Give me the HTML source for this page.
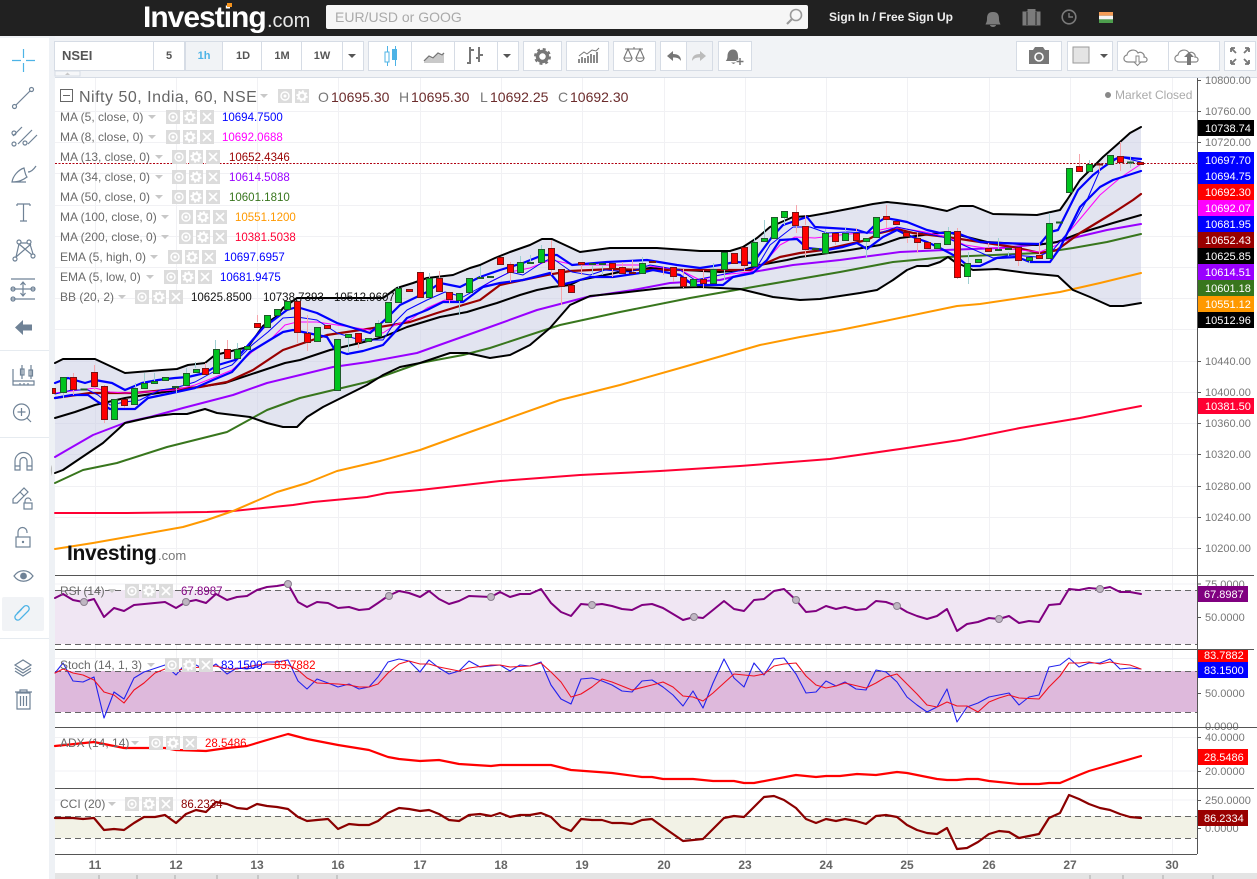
<!DOCTYPE html>
<html><head><meta charset="utf-8"><title>Nifty 50 chart</title>
<style>
html,body{margin:0;padding:0;background:#fff;width:1257px;height:879px;overflow:hidden}
svg{display:block;position:absolute;left:0;top:0}
text{font-family:"Liberation Sans",sans-serif}
.lg{font-size:12px;fill:#6a6a6a}
.v{font-size:11.5px}
.ax{font-size:11px;fill:#777}
.tg{font-size:11px;fill:#fff}
.d{font-size:12px;font-weight:bold;fill:#666;text-anchor:middle}
.tb{font-size:11px;fill:#555;font-weight:bold;text-anchor:middle}
.ic{fill:none;stroke:#6f8296;stroke-width:1.2}
.btn{fill:#fff;stroke:#d6dce5}
.ln{fill:none;stroke-linejoin:round;stroke-linecap:round}
</style></head><body>
<svg width="1257" height="879" viewBox="0 0 1257 879" xmlns="http://www.w3.org/2000/svg">
<defs>
<g id="sq"><rect width="14" height="14" fill="#dcdcdc"/><circle cx="7" cy="7" r="4" fill="none" stroke="#fff" stroke-width="1.4"/><circle cx="7" cy="7" r="1.5" fill="#fff"/></g>
<g id="gr"><rect width="14" height="14" fill="#dcdcdc"/><circle cx="7" cy="7" r="3.4" fill="none" stroke="#fff" stroke-width="2.2"/><circle cx="7" cy="7" r="5" fill="none" stroke="#fff" stroke-width="1.4" stroke-dasharray="2 1.9"/></g>
<g id="xx"><rect width="14" height="14" fill="#dcdcdc"/><path d="M3 3l8 8M11 3l-8 8" stroke="#fff" stroke-width="1.6"/></g>
<path id="cr" d="M0 0h8l-4 4z" fill="#c8c8c8"/>
</defs>

<!-- base -->
<rect width="1257" height="879" fill="#fff"/>
<rect x="0" y="36" width="1257" height="41" fill="#f1f3f6"/>
<rect x="49" y="36" width="6" height="843" fill="#eef1f5"/>
<rect x="0" y="36" width="49" height="843" fill="#fff"/>
<rect x="0" y="36" width="49" height="2" fill="#f1f3f6"/>
<rect x="55" y="77" width="1202" height="1" fill="#d6dce5"/>

<!-- header -->
<rect width="1257" height="36" fill="#212121"/>
<text x="143" y="27" font-size="30" font-weight="bold" fill="#fff" letter-spacing="-1">Investing</text>
<text x="267" y="27" font-size="20" fill="#e8e8e8">.com</text>
<rect x="227" y="3" width="5" height="4" fill="#f7941d"/>
<rect x="326" y="5" width="482" height="24" rx="2" fill="#f6f6f6"/>
<text x="335" y="22" font-size="14" fill="#aaa">EUR/USD or GOOG</text>
<circle cx="796" cy="15" r="5.5" fill="none" stroke="#9a9a9a" stroke-width="1.6"/><path d="M792 19l-5 5" stroke="#9a9a9a" stroke-width="2.2"/>
<text x="829" y="21" font-size="12" font-weight="bold" fill="#eee">Sign In / Free Sign Up</text>
<path d="M993 13c-5 0-6 3-6 7 0 3-1 4-1.500 5.500h15c-.5-1.500-1.500-2.500-1.500-5.500 0-4-1-7-6-7zM990 26a3 2 0 0 0 6 0z" fill="#7b7b7b" transform="translate(0 -1)"/>
<path d="M1023 12h17v13h-17zM1028 12v-2.500h7V12" fill="#7b7b7b" stroke="#7b7b7b"/><path d="M1027 12v13M1036 12v13" stroke="#212121"/>
<circle cx="1069" cy="17" r="6.800" fill="none" stroke="#7b7b7b" stroke-width="1.600"/><path d="M1069 13v4h4" fill="none" stroke="#7b7b7b" stroke-width="1.400"/>
<rect x="1099" y="12" width="14" height="3.700" fill="#f39c56"/><rect x="1099" y="15.700" width="14" height="3.700" fill="#f4f4f4"/><rect x="1099" y="19.400" width="14" height="3.600" fill="#4d9e4d"/>

<!-- toolbar buttons -->
<g class="btn">
<rect x="54.500" y="41.500" width="309" height="29"/>
<rect x="368.500" y="41.500" width="129" height="29"/><rect x="497.500" y="41.500" width="21" height="29"/>
<rect x="523.500" y="41.500" width="38" height="29"/><rect x="566.500" y="41.500" width="42" height="29"/>
<rect x="613.500" y="41.500" width="42" height="29"/><rect x="660.500" y="41.500" width="26" height="29"/>
<rect x="686.500" y="41.500" width="26" height="29" style="fill:#f1f3f6"/><rect x="718.500" y="41.500" width="33" height="29"/>
<rect x="1016.500" y="41.500" width="45" height="29"/><rect x="1067.500" y="41.500" width="45" height="29"/>
<rect x="1117.500" y="41.500" width="51" height="29"/><rect x="1168.500" y="41.500" width="51" height="29"/><rect x="1224.500" y="41.500" width="31" height="29"/>
<rect x="185.500" y="41.500" width="37" height="29" style="fill:#f1f3f6"/>
</g>
<path d="M153.500 41v30M184.500 41v30M222.500 41v30M261.500 41v30M301.500 41v30M342.500 41v30M411.500 41v30M454.500 41v30" stroke="#d6dce5"/>
<text x="62" y="60" font-size="13" font-weight="bold" fill="#555">NSEI</text>
<text class="tb" x="169" y="59">5</text><text class="tb" x="204" y="59" style="fill:#4db3e6">1h</text><text class="tb" x="243" y="59">1D</text><text class="tb" x="282" y="59">1M</text><text class="tb" x="322" y="59">1W</text>
<path d="M348 54h8l-4 4zM503 54h8l-4 4zM1100 54h8l-4 4z" fill="#555"/>
<path d="M387.500 46v20M395.500 46v20" stroke="#4db3e6"/><rect x="385" y="52" width="4" height="10" fill="#fff" stroke="#4db3e6"/><rect x="392" y="49" width="5" height="11" fill="#4db3e6"/>
<path d="M424 62l5-5 4 2 5-5 4 2 2-2v9h-20z" fill="#c9c9c9"/><path d="M424 61l5-5 4 2 5-5 4 2 2-2" fill="none" stroke="#777" stroke-width="1.300"/>
<path d="M470 47v17M467 63h3M479 47v15M479 55h4M470 52h-0" stroke="#777" stroke-width="2" fill="none"/><path d="M470 50h4M479 58h-3" stroke="#777" stroke-width="2"/>
<circle cx="542.500" cy="56.500" r="5" fill="none" stroke="#777" stroke-width="3.500"/><circle cx="542.500" cy="56.500" r="7.500" fill="none" stroke="#777" stroke-width="2" stroke-dasharray="3 2.900"/>
<path d="M579 63v-4M582 63v-6M585 63v-5M588 63v-7M591 63v-9M594 63v-8M597 63v-11" stroke="#777" stroke-width="1.700"/><path d="M579 56l5-4 3 2 5-4 4 1 3-3" fill="none" stroke="#777"/>
<path d="M634 49v-2M625 49h18M628 49l-4 9h8zM640 49l-4 9h8z" fill="none" stroke="#777" stroke-width="1.100"/><path d="M624 58a4 3.500 0 0 0 8 0zM636 58a4 3.500 0 0 0 8 0z" fill="none" stroke="#777"/>
<path d="M667 56l6-5v3c5 0 8 2 8 7-2-3-4-3.500-8-3.500V61z" fill="#777"/>
<path d="M706 56l-6-5v3c-5 0-8 2-8 7 2-3 4-3.500 8-3.500V61z" fill="#bbb"/>
<path d="M733 49.500c-3.500 0-5.500 3-5.500 6.500 0 2.500-.8 4-1.800 5h14c-1-1-1.500-2.500-1.700-5 0-3.500-1.500-6.500-5-6.500zM731 62.500h5l-2.500 1.500z" fill="#777"/><path d="M740 58v7M736.500 61.500h7" stroke="#fff" stroke-width="3.500"/><path d="M740 58v7M736.500 61.500h7" stroke="#777" stroke-width="1.500"/>
<path d="M1029 50h4l2-3h8l2 3h4v14h-20z" fill="#777"/><circle cx="1039" cy="57" r="4" fill="#777" stroke="#fff" stroke-width="1.600"/>
<rect x="1073" y="47" width="16" height="16" fill="#e4e4e4" stroke="#999"/>
<path d="M1128 62c-5 0-5.500-6-1-7 .5-5 8-7 11-2 3-2 7 1 6 4 4 0 4 5 .5 5h-4M1135 62h-7" fill="none" stroke="#888" stroke-width="1.200"/><path d="M1139 56v6h2l-3.500 3.500L1134 62h2v-6z" fill="#fff" stroke="#888"/>
<path d="M1179 62c-5 0-5.500-6-1-7 .5-5 8-7 11-2 3-2 7 1 6 4 4 0 4 5 .5 5z" fill="none" stroke="#888" stroke-width="1.200"/><path d="M1194 57l-5-5-5 5h3v8h4v-8z" fill="#777"/>
<path d="M1231 48l5 5M1231 48h4M1231 48v4M1249 48l-5 5M1249 48h-4M1249 48v4M1231 64l5-5M1231 64h4M1231 64v-4M1249 64l-5-5M1249 64h-4M1249 64v-4" stroke="#777" stroke-width="1.800" fill="none"/>
<rect x="55" y="71" width="25" height="5" fill="#f6f7f9" stroke="#d6dce5"/><path d="M65 75l2.500-2.500 2.500 2.500z" fill="#c8c8c8"/>

<!-- grid -->
<path d="M55 111.500H1197M55 142.500H1197M55 173.500H1197M55 205.500H1197M55 236.500H1197M55 267.500H1197M55 298.500H1197M55 329.500H1197M55 361.500H1197M55 392.500H1197M55 423.500H1197M55 454.500H1197M55 486.500H1197M55 517.500H1197M55 548.500H1197M55 584H1197M55 617H1197M55 658.500H1197M55 693H1197M55 737.500H1197M55 771H1197M55 800H1197M55 828H1197" stroke="#f1f1f4"/>
<path d="M95.500 78V854M176.500 78V854M257.500 78V854M338.500 78V854M420.500 78V854M501.500 78V854M582.500 78V854M664.500 78V854M745.500 78V854M826.500 78V854M907.500 78V854M989.500 78V854M1070.500 78V854M1172.500 78V854" stroke="#f1f1f4"/>

<!-- BB fill -->
<polygon fill="#c8cbe2" fill-opacity=".52" points="55,363 63,359 95,359 125,373 162,370 177,369 188,365 205,363 215,355 248,347 263,326 277,316 283,308 297,298 383,298 397,288 413,283 427,278 453,275 470,268 480,265 495,258 510,252 530,245 542,239 552,239 580,252 610,248 657,248 700,251 730,251 743,247 757,238 770,227 793,217 810,216 827,213 853,208 873,204 887,202 897,203 923,206 947,211 960,206 973,206 993,214 1037,215 1060,210 1067,200 1080,180 1103,157 1120,142 1130,133 1141,127 1141,303 1123,306 1110,306 1090,297 1073,290 1058,276 1027,273 997,269 973,270 955,262 948,257 940,262 928,266 917,266 907,270 893,280 877,290 860,293 840,296 820,299 800,300 773,297 740,289 700,287 663,288 620,293 590,296 570,305 550,328 530,345 510,355 490,358 467,353 450,353 420,363 400,367 383,375 367,385 343,397 323,407 307,417 297,427 283,427 267,423 250,417 217,413 205,409 187,414 173,414 157,416 147,418 125,423 103,443 63,470 55,473"/>

<!-- crosshair -->
<path d="M55 163.500H1197" stroke="#b00010" stroke-dasharray="2 1.500"/>

<!-- MA lines -->
<g class="ln" stroke-width="2">
<polyline stroke="#ff0033" points="55,513 127,513 207,512 233,511 293,505 313,502 367,497 387,493 420,490 500,481 580,475 660,471 740,466 830,459 900,449 960,440 1020,428 1080,418 1120,410 1141,406"/>
<polyline stroke="#ff9900" points="55,549 93,543 127,537 183,527 207,520 233,511 277,492 307,483 337,471 380,461 420,450 470,432 560,400 620,385 680,368 760,345 800,337 840,330 880,322 957,306 980,304 1040,295 1060,292 1100,283 1141,273"/>
<polyline stroke="#38761d" points="55,483 83,470 117,463 167,447 227,432 267,410 300,398 367,382 420,363 463,355 490,348 560,325 620,312 690,298 753,287 840,272 893,262 947,257 1040,253 1073,248 1107,242 1141,234"/>
<polyline stroke="#9900ff" points="55,457 67,450 93,435 127,422 150,417 183,408 233,395 267,383 300,375 333,367 368,362 417,353 490,327 537,310 587,297 633,290 670,283 720,280 753,272 793,265 840,260 900,252 945,250 1000,248 1053,243 1073,238 1107,230 1141,224"/>
<polyline stroke="#000" points="55,363 63,359 95,359 125,373 162,370 177,369 188,365 205,363 215,355 248,347 263,326 277,316 283,308 297,298 383,298 397,288 413,283 427,278 453,275 470,268 480,265 495,258 510,252 530,245 542,239 552,239 580,252 610,248 657,248 700,251 730,251 743,247 757,238 770,227 793,217 810,216 827,213 853,208 873,204 887,202 897,203 923,206 947,211 960,206 973,206 993,214 1037,215 1060,210 1067,200 1080,180 1103,157 1120,142 1130,133 1141,127"/>
<polyline stroke="#000" points="55,473 63,470 103,443 125,423 147,418 157,416 173,414 187,414 205,409 217,413 250,417 267,423 283,427 297,427 307,417 323,407 343,397 367,385 383,375 400,367 420,363 450,353 467,353 490,358 510,355 530,345 550,328 570,305 590,296 620,293 663,288 700,287 740,289 773,297 800,300 820,299 840,296 860,293 877,290 893,280 907,270 917,266 928,266 940,262 948,257 955,262 973,270 997,269 1027,273 1058,276 1073,290 1090,297 1110,306 1123,306 1141,303"/>
<polyline stroke="#000" points="55,418 75,412 95,405 125,398 178,390 225,383 255,373 285,363 300,360 330,350 360,343 383,337 407,327 440,317 467,312 480,308 497,303 520,295 537,290 552,287 570,285 580,280 620,272 650,268 667,269 720,272 743,270 760,265 787,260 800,257 850,250 880,245 900,238 947,232 967,237 987,242 1037,245 1057,242 1080,233 1113,223 1141,215"/>
<polyline stroke="#990000" stroke-width="2.200" points="55,398 90,393 133,393 200,387 227,382 253,370 283,350 327,335 367,329 410,322 437,313 463,305 480,300 500,285 523,280 547,275 570,271 613,269 647,270 700,270 750,270 780,257 800,253 823,250 867,240 880,233 897,229 913,233 947,237 980,242 1013,247 1040,253 1057,250 1080,233 1113,213 1133,200 1141,194"/>
</g>
<g class="ln" stroke-width="1">
<polyline stroke="#ff00ff" points="55,393 80,390 95,388 110,392 125,393 145,392 175,390 195,385 213,378 232,370 252,352 270,340 285,325 297,322 317,322 337,325 370,330 383,333 395,325 410,320 427,308 445,300 463,302 490,282 510,272 530,268 545,262 552,260 575,265 600,265 640,265 680,270 700,280 720,275 750,272 765,262 780,245 795,237 815,238 840,235 870,232 890,228 900,228 925,232 947,237 965,245 985,248 1000,248 1040,252 1057,245 1075,225 1100,195 1120,178 1141,164"/>
<polyline stroke="#0000ff" points="55,394 72,390 88,390 98,395 110,405 125,402 140,400 160,390 175,388 195,382 213,372 232,365 252,345 268,332 283,318 297,317 317,320 337,333 360,340 383,340 395,322 407,310 427,300 445,292 463,297 490,282 510,272 523,275 543,262 552,258 572,272 590,275 605,270 630,272 650,265 680,270 695,280 720,275 757,267 770,245 793,227 810,227 827,233 847,232 867,233 880,233 897,227 920,232 947,238 970,248 993,258 1013,255 1037,257 1053,250 1070,230 1087,200 1100,170 1120,157 1141,162"/>
</g>
<g class="ln" stroke="#0000ff" stroke-width="2.200">
<polyline points="55,383 68,378 85,383 95,380 112,383 125,390 142,383 158,380 175,378 188,377 205,373 218,365 235,360 250,343 263,328 287,310 297,307 317,313 337,323 370,333 387,318 400,305 427,292 440,283 460,287 480,277 500,270 523,263 543,255 557,255 572,265 607,262 647,260 677,265 700,268 720,265 735,262 753,263 772,237 783,225 807,217 815,227 847,229 857,230 867,233 877,223 885,218 897,220 907,222 927,230 940,233 957,233 980,242 997,243 1040,244 1050,232 1058,230 1078,190 1093,175 1113,160 1120,157 1141,159"/>
<polyline points="55,398 72,395 88,395 98,402 110,409 135,409 148,398 172,393 195,388 213,380 232,372 250,352 283,332 293,330 327,337 335,350 347,354 363,351 383,345 395,332 407,318 427,310 443,302 463,302 483,287 500,283 523,280 550,273 560,285 573,282 590,277 613,277 640,273 653,270 680,275 693,285 723,285 733,277 753,273 767,260 780,240 797,239 807,248 827,250 843,247 857,243 867,249 883,237 897,230 907,235 927,242 940,248 957,257 968,266 980,266 997,258 1017,257 1030,262 1050,262 1060,248 1080,207 1100,187 1113,180 1141,171"/>
</g>

<!-- wicks -->
<path fill="none" stroke="#f6a6ad" d="M104.500 385V423M73.500 373V395M94.500 365V390M124.500 405V408M227.500 340V349M205.500 363V368M257.500 315V322M297.500 300V343M307.500 315V351M358.500 333V348M439.500 271V278M449.500 299V303M510.500 262V282M551.500 240V248M551.500 270V275M561.500 287V305M581.500 265V275M612.500 268V277M622.500 262V267M632.500 260V272M663.500 266V275M673.500 276V282M683.500 268V276M683.500 287V288M703.500 270V279M703.500 283V288M744.500 265V271M796.500 205V212M796.500 225V233M805.500 215V225M805.500 250V257M835.500 241V245M856.500 228V232M886.500 205V216M886.500 220V228M907.500 238V243M917.500 232V238M917.500 243V253M957.500 228V231M957.500 277V279M988.500 243V248M1018.500 260V266M1039.500 243V255M1079.500 154V166M1099.500 164V172M1120.500 142V156M1120.500 162V171"/>
<path fill="none" stroke="#9fcfd2" d="M215.500 340V349M237.500 343V349M144.500 373V383M154.500 373V382M135.500 383V388M176.500 388V393M186.500 368V373M195.500 362V368M348.500 335V353M378.500 320V323M398.500 286V289M429.500 273V278M459.500 300V315M480.500 266V277M520.500 256V262M530.500 255V262M541.500 245V249M592.500 263V275M602.500 263V275M642.500 257V263M713.500 263V269M724.500 270V280M754.500 238V242M764.500 220V238M784.500 217V225M825.500 229V233M845.500 228V232M866.500 242V258M948.500 227V231M968.500 252V263M968.500 276V284M998.500 238V249M1008.500 252V256M1029.500 261V263M1049.500 213V224M1089.500 160V164M1130.500 157V168M63.500 392V398"/>

<!-- candles -->
<path fill="#00c41f" stroke="#1f5a2a" d="M60.500 377.500h6v15h-6zM111.500 399.500h6v20h-6zM131.500 388.500h6v16h-6zM141.500 383.500h6v5h-6zM151.500 381.500h6v2h-6zM162.500 377.500h6v3h-6zM172.500 386.500h6v1h-6zM183.500 373.500h6v12h-6zM193.500 369.500h6v3h-6zM213.500 349.500h6v24h-6zM234.500 349.500h6v9h-6zM244.500 346.500h6v3h-6zM264.500 315.500h6v12h-6zM274.500 309.500h6v6h-6zM284.500 301.500h6v8h-6zM314.500 327.500h6v14h-6zM334.500 339.500h6v51h-6zM345.500 334.500h6v3h-6zM365.500 338.500h6v3h-6zM375.500 323.500h6v13h-6zM385.500 302.500h6v20h-6zM395.500 288.500h6v14h-6zM426.500 278.500h6v19h-6zM456.500 293.500h6v7h-6zM466.500 278.500h6v14h-6zM477.500 277.500h6v1h-6zM487.500 276.500h6v1h-6zM517.500 262.500h6v10h-6zM527.500 262.500h6v1h-6zM538.500 249.500h6v13h-6zM589.500 263.500h6v1h-6zM599.500 263.500h6v1h-6zM639.500 263.500h6v10h-6zM690.500 279.500h6v7h-6zM710.500 269.500h6v14h-6zM721.500 252.500h6v17h-6zM751.500 242.500h6v24h-6zM761.500 238.500h6v3h-6zM771.500 217.500h6v21h-6zM781.500 211.500h6v6h-6zM812.500 248.500h6v1h-6zM822.500 233.500h6v20h-6zM842.500 233.500h6v7h-6zM863.500 238.500h6v3h-6zM873.500 217.500h6v20h-6zM934.500 243.500h6v5h-6zM944.500 231.500h6v13h-6zM964.500 263.500h6v13h-6zM975.500 259.500h6v3h-6zM995.500 249.500h6v1h-6zM1005.500 248.500h6v1h-6zM1026.500 257.500h6v3h-6zM1046.500 223.500h6v35h-6zM1056.500 222h6v1h-6zM1066.500 168.500h6v24h-6zM1086.500 164.500h6v7h-6zM1107.500 155.500h6v9h-6zM1127.500 162h6v1h-6zM81 389h6v1h-6z"/>
<path fill="#ff0000" stroke="#7a1414" d="M52.500 388.500h3v5h-3zM70.500 377.500h6v12h-6zM91.500 372.500h6v14h-6zM101.500 386.500h6v33h-6zM121.500 399.500h6v6h-6zM202.500 368.500h6v6h-6zM224.500 349.500h6v9h-6zM254.500 323.500h6v4h-6zM294.500 301.500h6v31h-6zM304.500 333.500h6v9h-6zM324.500 325.500h6v3h-6zM355.500 333.500h6v9h-6zM406.500 289.500h6v2h-6zM417.500 272.500h6v25h-6zM436.500 278.500h6v13h-6zM446.500 292.500h6v7h-6zM497.500 257.500h6v7h-6zM507.500 264.500h6v8h-6zM548.500 248.500h6v21h-6zM558.500 269.500h6v17h-6zM568.500 285.500h6v7h-6zM578.500 262.500h6v2h-6zM609.500 263.500h6v5h-6zM619.500 267.500h6v6h-6zM629.500 272.500h6v1h-6zM649.500 261.500h6v1h-6zM670.500 267.500h6v9h-6zM680.500 277.500h6v9h-6zM700.500 279.500h6v4h-6zM731.500 253.500h6v10h-6zM741.500 247.500h6v18h-6zM792.500 212.500h6v13h-6zM802.500 226.500h6v23h-6zM832.500 233.500h6v8h-6zM853.500 233.500h6v7h-6zM883.500 216.500h6v3h-6zM893.500 221.500h6v3h-6zM903.500 232.500h6v4h-6zM914.500 238.500h6v4h-6zM924.500 242.500h6v6h-6zM954.500 231.500h6v46h-6zM985.500 248.500h6v3h-6zM1015.500 247.500h6v13h-6zM1036.500 255.500h6v3h-6zM1076.500 166.500h6v5h-6zM1096.500 164h6v1h-6zM1117.500 156.500h6v6h-6zM1137.500 162.500h6v2h-6z"/>

<!-- watermark -->
<text x="67" y="560" font-size="21" font-weight="bold" fill="#111" letter-spacing="-.3">Investing</text>
<text x="158" y="560" font-size="13" fill="#777">.com</text>

<!-- indicator panels -->
<rect x="55" y="590" width="1142" height="54" fill="#f0e6f3"/>
<rect x="55" y="671" width="1142" height="41" fill="#deb9dc"/>
<rect x="55" y="816" width="1142" height="22" fill="#f2f2e6"/>
<path d="M55 590.500H1197M55 644.500H1197M55 671.500H1197M55 712.500H1197M55 816.500H1197M55 838.500H1197" stroke="#666" stroke-dasharray="6 4"/>
<path d="M55 575.500H1254M55 649.500H1254M55 727.500H1254M55 788.500H1254M55 854.500H1197" stroke="#555"/>
<path d="M1197.500 78V854" stroke="#555"/>

<polyline class="ln" stroke="#800080" stroke-width="2" points="55,598 63,594 73,600 83,602 94,599 104,617 114,608 124,611 134,605 165,602 176,608 186,602 196,600 206,603 216,594 227,600 237,597 247,596 257,590 267,587 277,586 288,584 298,602 307,607 317,602 328,603 338,608 349,607 359,610 369,609 378,603 388,596 399,591 409,593 420,597 429,591 439,599 449,604 459,601 469,596 491,597 500,592 510,597 520,594 530,594 541,589 551,603 561,612 571,616 581,604 592,605 602,604 612,606 622,609 632,610 642,605 652,604 663,608 673,614 683,620 694,617 703,618 713,610 724,601 734,609 744,611 754,600 764,599 774,591 784,589 796,600 806,612 816,611 826,606 836,609 845,607 856,610 866,609 876,601 886,602 897,606 907,612 917,616 927,619 937,616 947,609 957,631 967,624 978,622 989,618 999,619 1009,616 1019,623 1029,621 1039,622 1049,605 1060,604 1069,589 1079,590 1089,588 1100,589 1110,587 1120,592 1130,592 1141,594"/>
<g fill="#bfb6c2" stroke="#8a7f8e"><circle cx="84" cy="602" r="3.500"/><circle cx="186" cy="602" r="3.500"/><circle cx="288" cy="584" r="3.500"/><circle cx="389" cy="596" r="3.500"/><circle cx="491" cy="597" r="3.500"/><circle cx="592" cy="605" r="3.500"/><circle cx="694" cy="617" r="3.500"/><circle cx="796" cy="600" r="3.500"/><circle cx="897" cy="606" r="3.500"/><circle cx="999" cy="619" r="3.500"/><circle cx="1100" cy="589" r="3.500"/></g>

<polyline class="ln" stroke="#2222ee" stroke-width="1.100" points="55,673 63,663 73,681 83,682 94,677 104,718 114,692 124,699 134,678 144,672 165,665 176,675 186,663 196,665 206,670 216,664 227,674 237,668 247,669 257,667 267,662 277,662 288,660 298,681 307,689 317,679 328,683 338,687 349,684 359,689 369,687 378,677 388,662 399,659 409,661 420,672 429,660 439,668 449,674 459,671 469,661 480,667 500,665 510,671 520,665 530,666 541,662 551,685 561,699 571,704 581,679 592,678 602,681 612,685 622,691 632,692 642,681 652,680 663,687 673,695 683,706 693,691 703,708 713,683 724,659 734,678 744,687 754,663 764,675 774,659 784,658 796,674 806,693 816,692 826,681 836,686 845,682 856,689 866,690 876,670 886,672 897,682 907,697 917,705 927,712 937,707 947,689 957,722 967,707 978,703 989,697 1009,693 1019,705 1029,697 1039,695 1049,667 1060,665 1069,658 1079,667 1089,663 1100,663 1110,659 1120,669 1130,668 1141,669"/>
<polyline class="ln" stroke="#f01020" stroke-width="1.100" points="55,673 63,669 73,673 83,675 94,680 104,692 114,695 124,703 134,690 144,683 155,673 165,669 176,671 186,668 206,667 216,666 227,669 237,669 257,665 267,664 288,665 298,670 307,678 317,683 338,684 349,685 359,687 369,687 378,684 388,673 399,664 409,661 420,664 429,664 439,667 449,669 459,671 469,668 491,665 500,665 510,667 530,666 541,663 551,672 561,682 571,697 581,694 592,687 602,679 612,682 632,690 652,685 663,682 673,687 683,696 693,697 703,701 713,693 724,683 734,674 754,676 764,674 774,666 784,664 796,663 806,676 816,685 826,688 836,686 845,683 866,688 876,683 886,677 897,674 907,684 917,694 927,705 937,707 947,702 957,706 967,706 978,712 989,702 999,698 1009,695 1019,698 1039,699 1049,687 1060,676 1069,663 1079,663 1089,662 1100,664 1110,662 1120,664 1130,665 1141,669"/>

<polyline class="ln" stroke="#ff0000" stroke-width="2.200" points="55,746 94,742 124,748 165,748 176,750 206,751 227,748 247,746 267,740 288,734 307,739 338,745 369,750 388,757 399,759 420,761 439,760 459,764 491,766 500,765 551,765 571,770 612,773 642,777 652,777 663,779 693,779 713,781 734,781 744,783 754,783 796,775 816,777 826,776 840,776 857,774 876,775 897,772 907,773 937,779 947,780 957,780 967,779 978,779 989,781 1019,784 1039,784 1049,783 1060,783 1079,775 1089,771 1110,765 1141,756"/>

<polyline class="ln" stroke="#8b0000" stroke-width="2.200" points="55,818 73,818 83,819 94,818 104,830 114,829 124,830 134,823 144,817 155,817 165,815 176,823 186,814 196,810 206,812 216,802 227,804 237,808 247,809 257,804 267,806 277,807 288,809 298,817 307,821 317,820 328,819 338,829 349,824 359,825 369,825 378,821 388,813 399,808 409,809 420,811 429,810 439,814 449,820 459,821 469,815 480,814 491,816 500,813 510,817 520,815 530,815 541,813 551,817 561,827 571,831 581,819 592,820 602,820 612,823 622,823 632,824 642,820 652,819 663,827 673,834 683,841 703,839 713,829 724,818 734,816 744,817 754,807 764,797 774,796 784,800 796,808 806,819 816,823 826,819 836,821 845,819 856,821 866,824 876,816 886,815 897,817 907,825 917,830 927,833 937,834 947,828 957,849 967,848 978,842 989,834 999,831 1009,832 1019,838 1029,836 1039,834 1049,818 1060,813 1069,795 1079,799 1089,804 1100,808 1110,810 1120,814 1130,817 1141,818"/>

<!-- legend -->
<rect x="60.500" y="89.500" width="12" height="12" fill="none" stroke="#666"/><path d="M63 95.500h7" stroke="#666"/>
<text x="79" y="102" font-size="16" fill="#666" letter-spacing=".5">Nifty 50, India, 60, NSE</text>
<use href="#cr" x="260" y="94"/><use href="#sq" x="278" y="89"/><use href="#gr" x="295" y="89"/>
<g font-size="14" fill="#6b2b2b">
<text x="318" y="102" fill="#777">O</text><text x="331" y="102">10695.30</text>
<text x="399" y="102" fill="#777">H</text><text x="411" y="102">10695.30</text>
<text x="480" y="102" fill="#777">L</text><text x="490" y="102">10692.25</text>
<text x="558" y="102" fill="#777">C</text><text x="570" y="102">10692.30</text>
</g>
<circle cx="1108" cy="95" r="3" fill="#888"/><text x="1115" y="99" font-size="12" fill="#aaa">Market Closed</text>

<text class="lg" x="60" y="121">MA (5, close, 0)</text><use href="#cr" x="148" y="115"/><use href="#sq" x="166" y="110"/><use href="#gr" x="183" y="110"/><use href="#xx" x="200" y="110"/><text class="v" x="222" y="121" fill="#0000ff">10694.7500</text>
<text class="lg" x="60" y="141">MA (8, close, 0)</text><use href="#cr" x="148" y="135"/><use href="#sq" x="166" y="130"/><use href="#gr" x="183" y="130"/><use href="#xx" x="200" y="130"/><text class="v" x="222" y="141" fill="#ff00ff">10692.0688</text>
<text class="lg" x="60" y="161">MA (13, close, 0)</text><use href="#cr" x="155" y="155"/><use href="#sq" x="172" y="150"/><use href="#gr" x="189" y="150"/><use href="#xx" x="206" y="150"/><text class="v" x="229" y="161" fill="#990000">10652.4346</text>
<text class="lg" x="60" y="181">MA (34, close, 0)</text><use href="#cr" x="155" y="175"/><use href="#sq" x="172" y="170"/><use href="#gr" x="189" y="170"/><use href="#xx" x="206" y="170"/><text class="v" x="229" y="181" fill="#9900ff">10614.5088</text>
<text class="lg" x="60" y="201">MA (50, close, 0)</text><use href="#cr" x="155" y="195"/><use href="#sq" x="172" y="190"/><use href="#gr" x="189" y="190"/><use href="#xx" x="206" y="190"/><text class="v" x="229" y="201" fill="#38761d">10601.1810</text>
<text class="lg" x="60" y="221">MA (100, close, 0)</text><use href="#cr" x="161" y="215"/><use href="#sq" x="179" y="210"/><use href="#gr" x="196" y="210"/><use href="#xx" x="213" y="210"/><text class="v" x="235" y="221" fill="#ff9900">10551.1200</text>
<text class="lg" x="60" y="241">MA (200, close, 0)</text><use href="#cr" x="161" y="235"/><use href="#sq" x="179" y="230"/><use href="#gr" x="196" y="230"/><use href="#xx" x="213" y="230"/><text class="v" x="235" y="241" fill="#ff0033">10381.5038</text>
<text class="lg" x="60" y="261">EMA (5, high, 0)</text><use href="#cr" x="150" y="255"/><use href="#sq" x="168" y="250"/><use href="#gr" x="185" y="250"/><use href="#xx" x="202" y="250"/><text class="v" x="224" y="261" fill="#0000ff">10697.6957</text>
<text class="lg" x="60" y="281">EMA (5, low, 0)</text><use href="#cr" x="146" y="275"/><use href="#sq" x="164" y="270"/><use href="#gr" x="181" y="270"/><use href="#xx" x="198" y="270"/><text class="v" x="220" y="281" fill="#0000ff">10681.9475</text>
<text class="lg" x="60" y="301">BB (20, 2)</text><use href="#cr" x="118" y="295"/><use href="#sq" x="135" y="290"/><use href="#gr" x="152" y="290"/><use href="#xx" x="169" y="290"/><text class="v" x="191" y="301" fill="#111">10625.8500</text><text class="v" x="263" y="301" fill="#111">10738.7393</text><text class="v" x="334" y="301" fill="#111">10512.9607</text>

<text class="lg" x="60" y="595">RSI (14)</text><use href="#cr" x="108" y="589"/><use href="#sq" x="125" y="584"/><use href="#gr" x="142" y="584"/><use href="#xx" x="159" y="584"/><text class="v" x="181" y="595" fill="#800080">67.8987</text>
<text class="lg" x="60" y="669">Stoch (14, 1, 3)</text><use href="#cr" x="147" y="663"/><use href="#sq" x="165" y="658"/><use href="#gr" x="182" y="658"/><use href="#xx" x="199" y="658"/><text class="v" x="221" y="669" fill="#0000ff">83.1500</text><text class="v" x="274" y="669" fill="#ff0000">83.7882</text>
<text class="lg" x="60" y="747">ADX (14, 14)</text><use href="#cr" x="131" y="741"/><use href="#sq" x="149" y="736"/><use href="#gr" x="166" y="736"/><use href="#xx" x="183" y="736"/><text class="v" x="205" y="747" fill="#ff0000">28.5486</text>
<text class="lg" x="60" y="808">CCI (20)</text><use href="#cr" x="108" y="802"/><use href="#sq" x="125" y="797"/><use href="#gr" x="142" y="797"/><use href="#xx" x="159" y="797"/><text class="v" x="181" y="808" fill="#8b0000">86.2334</text>

<!-- y axis -->
<path d="M1197 80.500h4M1197 111.500h4M1197 142.500h4M1197 361.500h4M1197 392.500h4M1197 423.500h4M1197 454.500h4M1197 486.500h4M1197 517.500h4M1197 548.500h4M1197 584h4M1197 617.500h4M1197 693.500h4M1197 737.500h4M1197 771.500h4M1197 800.500h4M1197 828.500h4" stroke="#555"/>
<g class="ax">
<text x="1205" y="84">10800.00</text><text x="1205" y="115">10760.00</text><text x="1205" y="146">10720.00</text>
<text x="1205" y="365">10440.00</text><text x="1205" y="396">10400.00</text><text x="1205" y="427">10360.00</text><text x="1205" y="458">10320.00</text><text x="1205" y="490">10280.00</text><text x="1205" y="521">10240.00</text><text x="1205" y="552">10200.00</text>
<text x="1205" y="588">75.0000</text><text x="1205" y="621">50.0000</text><text x="1205" y="697">50.0000</text><text x="1205" y="730">0.0000</text><text x="1205" y="741">40.0000</text><text x="1205" y="775">20.0000</text><text x="1205" y="804">250.0000</text><text x="1205" y="832">0.0000</text>
</g>
<rect x="1197" y="727" width="60" height="1" fill="#555"/>
<g>
<rect x="1198" y="120" width="56" height="16" fill="#000"/><text class="tg" x="1205" y="132">10738.74</text>
<rect x="1198" y="152" width="56" height="32" fill="#0000ff"/><text class="tg" x="1205" y="164">10697.70</text><text class="tg" x="1205" y="180">10694.75</text>
<rect x="1198" y="184" width="56" height="16" fill="#ff0000"/><text class="tg" x="1205" y="196">10692.30</text>
<rect x="1198" y="200" width="56" height="16" fill="#ff00ff"/><text class="tg" x="1205" y="212">10692.07</text>
<rect x="1198" y="216" width="56" height="16" fill="#0000ff"/><text class="tg" x="1205" y="228">10681.95</text>
<rect x="1198" y="232" width="56" height="16" fill="#990000"/><text class="tg" x="1205" y="244">10652.43</text>
<rect x="1198" y="248" width="56" height="16" fill="#000"/><text class="tg" x="1205" y="260">10625.85</text>
<rect x="1198" y="264" width="56" height="16" fill="#9900ff"/><text class="tg" x="1205" y="276">10614.51</text>
<rect x="1198" y="280" width="56" height="16" fill="#38761d"/><text class="tg" x="1205" y="292">10601.18</text>
<rect x="1198" y="296" width="56" height="16" fill="#ff9900"/><text class="tg" x="1205" y="308">10551.12</text>
<rect x="1198" y="312" width="56" height="16" fill="#000"/><text class="tg" x="1205" y="324">10512.96</text>
<rect x="1198" y="398" width="56" height="16" fill="#ff0033"/><text class="tg" x="1205" y="410">10381.50</text>
<rect x="1198" y="586" width="50" height="16" fill="#800080"/><text class="tg" x="1204" y="598">67.8987</text>
<rect x="1198" y="650" width="50" height="12" fill="#ff0000"/><text class="tg" x="1204" y="659">83.7882</text>
<rect x="1198" y="662" width="50" height="16" fill="#0000ff"/><text class="tg" x="1204" y="674">83.1500</text>
<rect x="1198" y="749" width="50" height="16" fill="#ff0000"/><text class="tg" x="1204" y="761">28.5486</text>
<rect x="1198" y="810" width="50" height="16" fill="#990000"/><text class="tg" x="1204" y="822">86.2334</text>
</g>

<!-- x axis -->
<rect x="55" y="873" width="1202" height="6" fill="#e4e4e4"/>
<g class="d">
<text x="95" y="869">11</text><text x="176" y="869">12</text><text x="257" y="869">13</text><text x="338" y="869">16</text><text x="420" y="869">17</text><text x="501" y="869">18</text><text x="582" y="869">19</text><text x="664" y="869">20</text><text x="745" y="869">23</text><text x="826" y="869">24</text><text x="907" y="869">25</text><text x="989" y="869">26</text><text x="1070" y="869">27</text><text x="1172" y="869">30</text>
</g>
<path d="M99 875v4M137 875v4M175 875v4M217 875v4M258 875v4M298 875v4M337 875v4M1090 875v4M1123 875v4M1163 875v4M1213 875v4" stroke="#aaa"/>

<!-- sidebar -->
<path d="M12 60.500h9M26 60.500h9M23.500 49v9M23.500 63v9" stroke="#4db3e6" stroke-width="1.200"/>
<g class="ic">
<path d="M16 105l14-14"/><circle cx="14.500" cy="106.500" r="2"/><circle cx="31.500" cy="89.500" r="2"/>
<path d="M13 136l9-9M18 144l14-14M28 144l9-9"/><circle cx="14" cy="133" r="2"/><circle cx="14" cy="144" r="2"/><circle cx="25" cy="143" r="2"/>
<path d="M12 182c1-6 6-12 12-14 1 5 2 8 3 9-4 3-8 5-15 5zM12 182h14M28 172c3 0 6-3 8-6"/>
<path d="M17 204h13M23.500 204v17M20 221h7M17 204v2M30 204v2"/>
<circle cx="15" cy="259" r="2"/><circle cx="33" cy="256" r="2"/><circle cx="19" cy="242" r="2"/><circle cx="29" cy="242" r="2"/><path d="M16 257l3-13M21 243h6M30 244l3 10M16 257l15-13M19 244l13 11"/>
<path d="M11 279h24M11 289h24M11 299h24M23 283v12M20.500 285l2.500-3 2.500 3M20.500 293l2.500 3 2.500-3"/>
<circle cx="13" cy="289" r="2"/><circle cx="33" cy="289" r="2"/><circle cx="13" cy="299" r="2"/>
<path d="M13 369v16h21v-4H13M20 385v-2M24 385v-2M28 385v-2"/><path d="M22 365v14M31 365v14"/><rect x="20.500" y="369" width="3.500" height="6"/><rect x="29" y="370" width="3.500" height="6"/>
<circle cx="21.500" cy="412" r="8"/><path d="M27 418l4 4M21.500 408v8M17.500 412h8"/>
<path d="M15 470v-9a8.500 8.500 0 0 1 17 0v9h-5v-9a3.500 3.500 0 0 0-7 0v9zM15 466h5M27 466h5"/>
<path d="M13 499l11-11 4 4-11 11h-4zM20 492l4 4"/><rect x="24" y="503" width="8" height="6"/><path d="M25 503v-2a3 3 0 0 1 6 0"/>
<rect x="16" y="537" width="14" height="10"/><path d="M18 537v-5a4.500 4.500 0 0 1 9 0v1"/>
<path d="M14 576c5-7 14-7 19 0-5 7-14 7-19 0z"/>
<path d="M15 665l8-5 8 5-8 5zM15 668l8 5 8-5M15 671l8 5 8-5"/>
<path d="M17 693h13v16H17zM15 692h17M20 692v-2h7v2M20.500 696v10M23.500 696v10M26.500 696v10"/>
</g>
<path d="M15 327.500l8-7.500v4.500h9v6h-9v4.500z" fill="#6f8296"/>
<circle cx="23.500" cy="576" r="3.400" fill="#6f8296"/>
<circle cx="23" cy="542" r="1.200" fill="#6f8296"/>
<path d="M0 350.500h49M0 437.500h49M0 638.500h49" stroke="#e6ebf0"/>
<rect x="2" y="597" width="42" height="34" rx="2" fill="#f1f3f6"/>
<path d="M17 613.500l7-7a3 3 0 0 1 4.300 4.300l-8.500 8.500a2.900 2.900 0 0 1-4.100-4.100l6-6" fill="none" stroke="#4db3e6" stroke-width="1.300"/>
<path d="M52 465c-1.500 2-1.500 8 0 11z" fill="#bbb"/>
</svg>
</body></html>
